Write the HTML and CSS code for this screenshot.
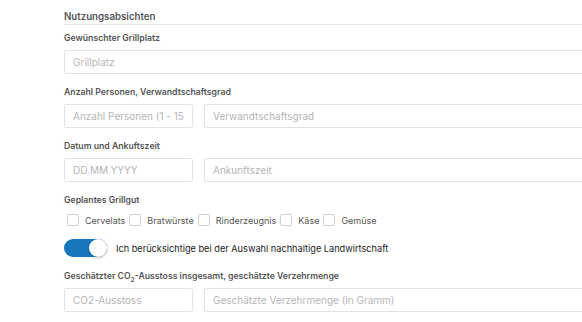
FILE: index.html
```html
<!DOCTYPE html>
<html lang="de">
<head>
  <meta charset="UTF-8">
  <meta name="viewport" content="width=device-width, initial-scale=1.0">
  <title>Nutzungsabsichten</title>
  <link rel="stylesheet" href="styles.css">
</head>
<body>
  <form class="form">
    <fieldset class="section">
      <legend class="section-title">Nutzungsabsichten</legend>

      <div class="group">
        <label class="label" for="platz">Gewünschter Grillplatz</label>
        <input class="input" id="platz" type="text" placeholder="Grillplatz">
      </div>

      <div class="group">
        <label class="label" for="personen">Anzahl Personen, Verwandtschaftsgrad</label>
        <div class="row">
          <input class="input small" id="personen" type="text" placeholder="Anzahl Personen (1 - 15)">
          <input class="input" type="text" placeholder="Verwandtschaftsgrad">
        </div>
      </div>

      <div class="group">
        <label class="label" for="datum">Datum und Ankuftszeit</label>
        <div class="row">
          <input class="input small" id="datum" type="text" placeholder="DD.MM.YYYY">
          <input class="input" type="text" placeholder="Ankunftszeit">
        </div>
      </div>

      <div class="group">
        <span class="label">Geplantes Grillgut</span>
        <div class="checks">
          <label class="check"><input type="checkbox"><span class="box"></span>Cervelats</label>
          <label class="check"><input type="checkbox"><span class="box"></span>Bratwürste</label>
          <label class="check"><input type="checkbox"><span class="box"></span>Rinderzeugnis</label>
          <label class="check"><input type="checkbox"><span class="box"></span>Käse</label>
          <label class="check"><input type="checkbox"><span class="box"></span>Gemüse</label>
        </div>
      </div>

      <label class="toggle">
        <input type="checkbox" checked>
        <span class="switch"></span>
        Ich berücksichtige bei der Auswahl nachhaltige Landwirtschaft
      </label>

      <div class="group">
        <label class="label" for="co2">Geschätzter CO<sub>2</sub>-Ausstoss insgesamt, geschätzte Verzehrmenge</label>
        <div class="row">
          <input class="input small" id="co2" type="text" placeholder="CO2-Ausstoss">
          <input class="input" type="text" placeholder="Geschätzte Verzehrmenge (in Gramm)">
        </div>
      </div>
    </fieldset>
  </form>
</body>
</html>
```

FILE: styles.css
```css
body {
  font-family: Inter, "Liberation Sans", sans-serif;
  color: #222;
  background-color: #fff;
  margin: 0;
  padding: 0;
  overflow: hidden;
}
.form {
  width: 680px;
  padding: 10px 0 0 64px;
}
.section {
  border: none;
  margin: 0;
  padding: 0;
}
.section-title {
  display: block;
  width: 100%;
  padding: 0 0 1px;
  margin-bottom: 7px;
  font-size: 9.7px;
  font-weight: 600;
  line-height: 13px;
  color: #555;
  border-bottom: 1px solid #e8e8e8;
}
.group {
  margin-bottom: 12px;
}
.label {
  display: block;
  font-size: 8.7px;
  font-weight: 600;
  line-height: 13px;
  color: #555;
  margin-bottom: 5px;
}
.label sub {
  font-size: 6.5px;
  line-height: 0;
}
.input {
  display: block;
  box-sizing: border-box;
  width: 100%;
  height: 24px;
  padding: 0 8px;
  border: 1px solid #e3e3e3;
  border-radius: 2px;
  font-family: inherit;
  font-size: 10px;
  color: #222;
  background: #fff;
}
.input::placeholder {
  color: #b5b5b5;
}
.row {
  display: flex;
  gap: 11px;
}
.row .input {
  flex: 1;
}
.row .input.small {
  flex: 0 0 129px;
}
.checks {
  display: flex;
  align-items: center;
  height: 18px;
  margin-top: -1px;
  padding-left: 3px;
}
.check {
  display: flex;
  align-items: center;
  font-size: 9px;
  color: #555;
  margin-right: 4px;
}
.check input {
  display: none;
}
.box {
  width: 10px;
  height: 10px;
  border: 1px solid #d0d0d0;
  border-radius: 2px;
  margin-right: 6px;
  background: #fff;
}
.toggle {
  display: flex;
  align-items: center;
  font-size: 9.2px;
  color: #222;
  margin: -2px 0 13px;
}
.toggle input {
  display: none;
}
.switch {
  position: relative;
  width: 43px;
  height: 18px;
  border-radius: 9px;
  background: #1677bd;
  margin-right: 9px;
}
.switch::after {
  content: "";
  position: absolute;
  top: 0;
  right: 0;
  width: 18px;
  height: 18px;
  border-radius: 50%;
  background: #fff;
  box-shadow: 0 1px 3px rgba(0, 0, 0, 0.25);
}
```
